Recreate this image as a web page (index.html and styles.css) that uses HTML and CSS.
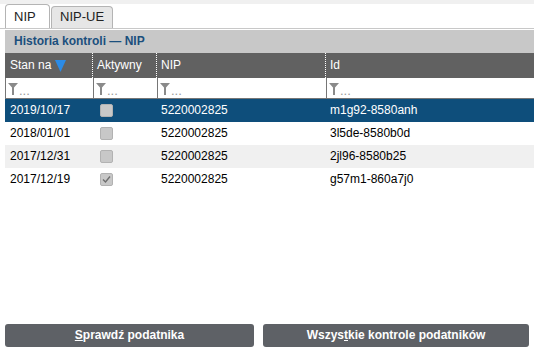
FILE: index.html
```html
<!DOCTYPE html>
<html>
<head>
<meta charset="utf-8">
<link rel="stylesheet" href="styles.css">
</head>
<body>
<div class="topstrip"></div>
<div class="tabs">
  <div class="tab active">NIP</div>
  <div class="tab">NIP-UE</div>
</div>
<div class="panel">
  <div class="title">Historia kontroli — NIP</div>
  <div class="grid head">
    <div class="hc">Stan na <svg class="sort" width="11" height="12" viewBox="0 0 11 12"><polygon points="0,0 11,0 5.5,12" fill="#2b8be6"/></svg></div>
    <div class="hc dv">Aktywny</div>
    <div class="hc dv">NIP</div>
    <div class="hc dv">Id</div>
  </div>
  <div class="grid filt">
    <div class="fc"><svg class="fn" width="10" height="12" viewBox="0 0 10 12"><polygon points="0,0 10,0 6,4.5 6,12 4,12 4,4.5" fill="#8a8a8a"/></svg><span>...</span></div>
    <div class="fc"><svg class="fn" width="10" height="12" viewBox="0 0 10 12"><polygon points="0,0 10,0 6,4.5 6,12 4,12 4,4.5" fill="#8a8a8a"/></svg><span>...</span></div>
    <div class="fc"><svg class="fn" width="10" height="12" viewBox="0 0 10 12"><polygon points="0,0 10,0 6,4.5 6,12 4,12 4,4.5" fill="#8a8a8a"/></svg><span>...</span></div>
    <div class="fc"><svg class="fn" width="10" height="12" viewBox="0 0 10 12"><polygon points="0,0 10,0 6,4.5 6,12 4,12 4,4.5" fill="#8a8a8a"/></svg><span>...</span></div>
  </div>
  <div class="grid row sel">
    <div class="c">2019/10/17</div><div class="c"><span class="cb"></span></div><div class="c">5220002825</div><div class="c">m1g92-8580anh</div>
  </div>
  <div class="grid row">
    <div class="c">2018/01/01</div><div class="c"><span class="cb"></span></div><div class="c">5220002825</div><div class="c">3l5de-8580b0d</div>
  </div>
  <div class="grid row alt">
    <div class="c">2017/12/31</div><div class="c"><span class="cb"></span></div><div class="c">5220002825</div><div class="c">2jl96-8580b25</div>
  </div>
  <div class="grid row">
    <div class="c">2017/12/19</div><div class="c"><span class="cb"><svg width="13" height="13" viewBox="0 0 13 13"><polyline points="3,6.5 5.5,9 10,3.5" fill="none" stroke="#6e6e6e" stroke-width="1.4"/></svg></span></div><div class="c">5220002825</div><div class="c">g57m1-860a7j0</div>
  </div>
</div>
<div class="buttons">
  <div class="btn b1"><u>S</u>prawdź podatnika</div>
  <div class="btn b2">Wszys<u>t</u>kie kontrole podatników</div>
</div>
</body>
</html>
```
FILE: styles.css
```css
html, body {
  margin: 0;
  padding: 0;
  background: #fff;
  font-family: "Liberation Sans", Arial, sans-serif;
  font-size: 12px;
  color: #000;
  width: 534px;
  height: 357px;
  overflow: hidden;
}
.topstrip {
  height: 4px;
  background: #f0f0f0;
}
.tabs {
  display: flex;
  align-items: flex-end;
  padding-left: 5px;
  height: 24px;
  border-bottom: 1px solid #c8c8c8;
}
.tab {
  box-sizing: border-box;
  height: 22px;
  padding: 0 8px;
  line-height: 20px;
  border: 1px solid #b4b4b4;
  border-bottom: none;
  border-radius: 4px 4px 0 0;
  background: #e6e6e6;
  color: #222;
  font-size: 13px;
  margin-right: 1px;
}
.tab.active {
  height: 24px;
  line-height: 23px;
  background: #fff;
  width: 45px;
}
.panel {
  margin-left: 5px;
  margin-top: 1px;
}
.title {
  height: 23px;
  line-height: 22px;
  background: #c8c8c8;
  color: #1b4f7d;
  font-weight: bold;
  padding-left: 9px;
}
.grid {
  display: grid;
  grid-template-columns: 87px 64px 169px 1fr;
}
.head {
  background: #616161;
  height: 25px;
  color: #fff;
}
.hc {
  line-height: 25px;
  padding-left: 5px;
  display: flex;
  align-items: center;
}
.hc.dv {
  border-left: 1px dotted #fff;
  padding-left: 4px;
}
.sort {
  margin-left: 4px;
}
.filt {
  height: 20px;
  border-left: 1px solid #767676;
  border-bottom: 1px solid #767676;
}
.fc {
  display: flex;
  align-items: center;
  padding-left: 2px;
  color: #999;
}
.fc + .fc {
  border-left: 1px solid #767676;
}
.fn {
  margin-top: 2px;
}
.fc span {
  font-size: 13px;
  margin-top: 4px;
  margin-left: 1px;
}
.row {
  height: 23px;
}
.row .c {
  line-height: 23px;
  padding-left: 5px;
  display: flex;
  align-items: center;
}
.sel {
  background: #0e4e7b;
  color: #fff;
}
.alt {
  background: #f0f0f0;
}
.cb {
  box-sizing: border-box;
  display: block;
  width: 13px;
  height: 13px;
  margin-left: 3px;
  background: #c8c8c8;
  border: 1px solid #b2b2b2;
  border-radius: 2px;
  position: relative;
}
.cb svg {
  position: absolute;
  left: -1px;
  top: -1px;
}
.buttons {
  display: flex;
  gap: 9px;
  padding-left: 5px;
  padding-right: 5px;
  margin-top: 133px;
}
.btn {
  height: 23px;
  line-height: 23px;
  background: #5e6166;
  color: #fff;
  font-weight: bold;
  text-align: center;
  border-radius: 3px;
}
.b1 { width: 249px; }
.b2 { width: 266px; }
```
